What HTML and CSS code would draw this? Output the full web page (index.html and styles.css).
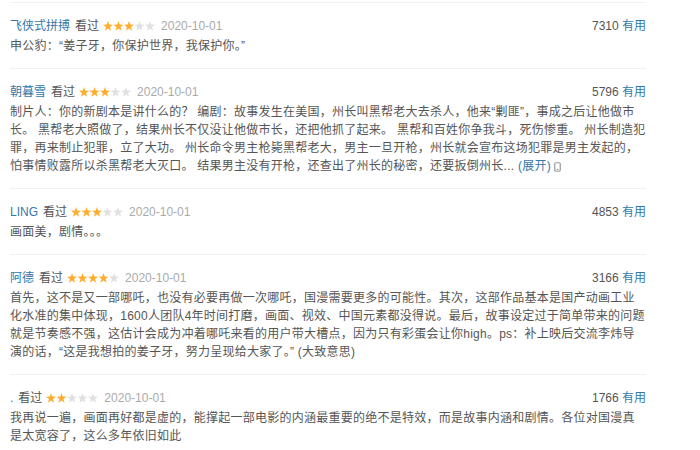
FILE: index.html
```html
<!DOCTYPE html>
<html lang="zh-CN">
<head>
  <meta charset="UTF-8">
  <title>短评</title>
  <link rel="stylesheet" href="styles.css">
</head>
<body>
  <div class="comments">

    <div class="comment">
      <div class="comment-info">
        <a class="user" href="#">飞侠式拼搏</a>
        <span class="status">看过</span>
        <svg class="stars" width="52" height="10" viewBox="0 0 52 10"><g><polygon class="on" points="5,0 6.2,3.6 10,3.7 7,6 8.1,9.7 5,7.5 1.9,9.7 3,6 0,3.7 3.8,3.6"/><polygon class="on" transform="translate(10.5 0)" points="5,0 6.2,3.6 10,3.7 7,6 8.1,9.7 5,7.5 1.9,9.7 3,6 0,3.7 3.8,3.6"/><polygon class="on" transform="translate(21 0)" points="5,0 6.2,3.6 10,3.7 7,6 8.1,9.7 5,7.5 1.9,9.7 3,6 0,3.7 3.8,3.6"/><polygon class="off" transform="translate(31.5 0)" points="5,0 6.2,3.6 10,3.7 7,6 8.1,9.7 5,7.5 1.9,9.7 3,6 0,3.7 3.8,3.6"/><polygon class="off" transform="translate(42 0)" points="5,0 6.2,3.6 10,3.7 7,6 8.1,9.7 5,7.5 1.9,9.7 3,6 0,3.7 3.8,3.6"/></g></svg>
        <span class="time">2020-10-01</span>
        <span class="votes">7310 <a href="#">有用</a></span>
      </div>
      <p class="short">申公豹：“姜子牙，你保护世界，我保护你。”</p>
    </div>

    <div class="comment">
      <div class="comment-info">
        <a class="user" href="#">朝暮雪</a>
        <span class="status">看过</span>
        <svg class="stars" width="52" height="10" viewBox="0 0 52 10"><g><polygon class="on" points="5,0 6.2,3.6 10,3.7 7,6 8.1,9.7 5,7.5 1.9,9.7 3,6 0,3.7 3.8,3.6"/><polygon class="on" transform="translate(10.5 0)" points="5,0 6.2,3.6 10,3.7 7,6 8.1,9.7 5,7.5 1.9,9.7 3,6 0,3.7 3.8,3.6"/><polygon class="on" transform="translate(21 0)" points="5,0 6.2,3.6 10,3.7 7,6 8.1,9.7 5,7.5 1.9,9.7 3,6 0,3.7 3.8,3.6"/><polygon class="off" transform="translate(31.5 0)" points="5,0 6.2,3.6 10,3.7 7,6 8.1,9.7 5,7.5 1.9,9.7 3,6 0,3.7 3.8,3.6"/><polygon class="off" transform="translate(42 0)" points="5,0 6.2,3.6 10,3.7 7,6 8.1,9.7 5,7.5 1.9,9.7 3,6 0,3.7 3.8,3.6"/></g></svg>
        <span class="time">2020-10-01</span>
        <span class="votes">5796 <a href="#">有用</a></span>
      </div>
      <p class="short">制片人：你的新剧本是讲什么的？ 编剧：故事发生在美国，州长叫黑帮老大去杀人，他来“剿匪”，事成之后让他做市长。 黑帮老大照做了，结果州长不仅没让他做市长，还把他抓了起来。 黑帮和百姓你争我斗，死伤惨重。 州长制造犯罪，再来制止犯罪，立了大功。 州长命令男主枪毙黑帮老大，男主一旦开枪，州长就会宣布这场犯罪是男主发起的，怕事情败露所以杀黑帮老大灭口。 结果男主没有开枪，还查出了州长的秘密，还要扳倒州长... <a class="unfold" href="#">(展开)</a><svg class="phone" width="7" height="10" viewBox="0 0 7 10"><rect x="0.75" y="0.75" width="5.5" height="8.5" rx="1.2" fill="none" stroke="#999" stroke-width="1.2"/><rect x="2.5" y="7" width="2" height="1" fill="#999"/></svg></p>
    </div>

    <div class="comment">
      <div class="comment-info">
        <a class="user" href="#">LING</a>
        <span class="status">看过</span>
        <svg class="stars" width="52" height="10" viewBox="0 0 52 10"><g><polygon class="on" points="5,0 6.2,3.6 10,3.7 7,6 8.1,9.7 5,7.5 1.9,9.7 3,6 0,3.7 3.8,3.6"/><polygon class="on" transform="translate(10.5 0)" points="5,0 6.2,3.6 10,3.7 7,6 8.1,9.7 5,7.5 1.9,9.7 3,6 0,3.7 3.8,3.6"/><polygon class="on" transform="translate(21 0)" points="5,0 6.2,3.6 10,3.7 7,6 8.1,9.7 5,7.5 1.9,9.7 3,6 0,3.7 3.8,3.6"/><polygon class="off" transform="translate(31.5 0)" points="5,0 6.2,3.6 10,3.7 7,6 8.1,9.7 5,7.5 1.9,9.7 3,6 0,3.7 3.8,3.6"/><polygon class="off" transform="translate(42 0)" points="5,0 6.2,3.6 10,3.7 7,6 8.1,9.7 5,7.5 1.9,9.7 3,6 0,3.7 3.8,3.6"/></g></svg>
        <span class="time">2020-10-01</span>
        <span class="votes">4853 <a href="#">有用</a></span>
      </div>
      <p class="short">画面美，剧情。。。</p>
    </div>

    <div class="comment">
      <div class="comment-info">
        <a class="user" href="#">阿德</a>
        <span class="status">看过</span>
        <svg class="stars" width="52" height="10" viewBox="0 0 52 10"><g><polygon class="on" points="5,0 6.2,3.6 10,3.7 7,6 8.1,9.7 5,7.5 1.9,9.7 3,6 0,3.7 3.8,3.6"/><polygon class="on" transform="translate(10.5 0)" points="5,0 6.2,3.6 10,3.7 7,6 8.1,9.7 5,7.5 1.9,9.7 3,6 0,3.7 3.8,3.6"/><polygon class="on" transform="translate(21 0)" points="5,0 6.2,3.6 10,3.7 7,6 8.1,9.7 5,7.5 1.9,9.7 3,6 0,3.7 3.8,3.6"/><polygon class="on" transform="translate(31.5 0)" points="5,0 6.2,3.6 10,3.7 7,6 8.1,9.7 5,7.5 1.9,9.7 3,6 0,3.7 3.8,3.6"/><polygon class="off" transform="translate(42 0)" points="5,0 6.2,3.6 10,3.7 7,6 8.1,9.7 5,7.5 1.9,9.7 3,6 0,3.7 3.8,3.6"/></g></svg>
        <span class="time">2020-10-01</span>
        <span class="votes">3166 <a href="#">有用</a></span>
      </div>
      <p class="short">首先，这不是又一部哪吒，也没有必要再做一次哪吒，国漫需要更多的可能性。其次，这部作品基本是国产动画工业化水准的集中体现，1600人团队4年时间打磨，画面、视效、中国元素都没得说。最后，故事设定过于简单带来的问题就是节奏感不强，这估计会成为冲着哪吒来看的用户带大槽点，因为只有彩蛋会让你high。ps：补上映后交流李炜导演的话，“这是我想拍的姜子牙，努力呈现给大家了。” (大致意思)</p>
    </div>

    <div class="comment">
      <div class="comment-info">
        <a class="user" href="#">.</a>
        <span class="status">看过</span>
        <svg class="stars" width="52" height="10" viewBox="0 0 52 10"><g><polygon class="on" points="5,0 6.2,3.6 10,3.7 7,6 8.1,9.7 5,7.5 1.9,9.7 3,6 0,3.7 3.8,3.6"/><polygon class="on" transform="translate(10.5 0)" points="5,0 6.2,3.6 10,3.7 7,6 8.1,9.7 5,7.5 1.9,9.7 3,6 0,3.7 3.8,3.6"/><polygon class="off" transform="translate(21 0)" points="5,0 6.2,3.6 10,3.7 7,6 8.1,9.7 5,7.5 1.9,9.7 3,6 0,3.7 3.8,3.6"/><polygon class="off" transform="translate(31.5 0)" points="5,0 6.2,3.6 10,3.7 7,6 8.1,9.7 5,7.5 1.9,9.7 3,6 0,3.7 3.8,3.6"/><polygon class="off" transform="translate(42 0)" points="5,0 6.2,3.6 10,3.7 7,6 8.1,9.7 5,7.5 1.9,9.7 3,6 0,3.7 3.8,3.6"/></g></svg>
        <span class="time">2020-10-01</span>
        <span class="votes">1766 <a href="#">有用</a></span>
      </div>
      <p class="short">我再说一遍，画面再好都是虚的，能撑起一部电影的内涵最重要的绝不是特效，而是故事内涵和剧情。各位对国漫真是太宽容了，这么多年依旧如此</p>
    </div>

  </div>
</body>
</html>
```

FILE: styles.css
```css
body {
  margin: 0;
  background-color: #fff;
  font-family: Arial, "Liberation Sans", "Noto Sans CJK SC", sans-serif;
  font-size: 12px;
  color: #555;
}

a {
  color: #3377aa;
  text-decoration: none;
}

.comments {
  width: 636px;
  margin-left: 10px;
  padding-top: 2px;
}

.comment {
  border-top: 1px solid #f0f0f0;
  padding: 13px 0 13px;
}

.comment-info {
  display: flex;
  align-items: center;
  height: 20px;
  line-height: 20px;
}

.status {
  margin-left: 5px;
  color: #555;
}

.stars {
  margin-left: 4px;
}

.stars .on {
  fill: #ffac2d;
}

.stars .off {
  fill: #e0e0e0;
}

.time {
  margin-left: 6px;
  color: #aaa;
}

.votes {
  margin-left: auto;
  color: #555;
}

.short {
  margin: 1px 0 0;
  line-height: 18px;
  letter-spacing: 0.25px;
  color: #555;
}

.phone {
  margin-left: 3px;
  vertical-align: -2px;
}
```
